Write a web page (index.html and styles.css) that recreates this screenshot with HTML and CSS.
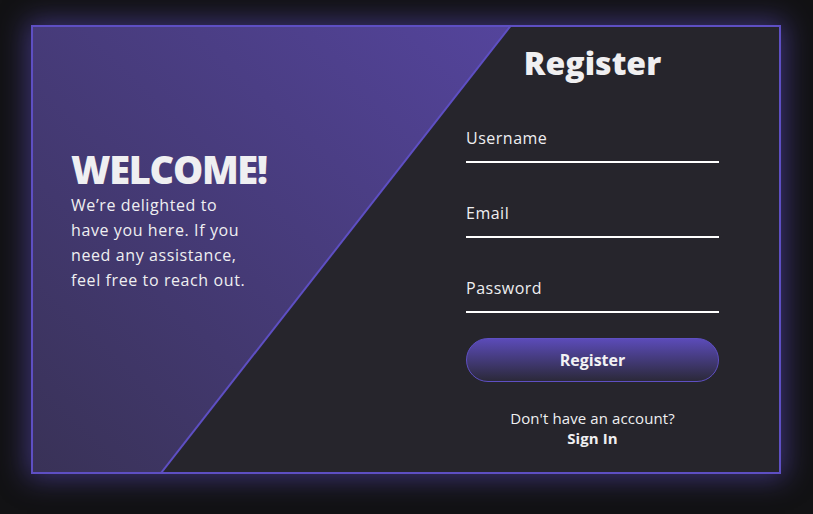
FILE: index.html
```html
<!DOCTYPE html>
<html lang="en">
<head>
<meta charset="utf-8">
<title>Register</title>
<link rel="stylesheet" href="styles.css">
</head>
<body>
<div class="card">
  <svg class="shape" width="746" height="445" viewBox="0 0 746 445" aria-hidden="true">
    <defs>
      <linearGradient id="lg" x1="0" y1="1" x2="1" y2="0">
        <stop offset="0" stop-color="#393257"/>
        <stop offset="1" stop-color="#54449c"/>
      </linearGradient>
    </defs>
    <polygon points="0,0 477,0 128,445 0,445" fill="url(#lg)"/>
    <line x1="477.5" y1="-1" x2="128" y2="446" stroke="#5e4fc3" stroke-width="2"/>
  </svg>
  <section class="welcome">
    <h1 class="welcome-title">WELCOME!</h1>
    <p class="welcome-text">We’re delighted to<br>have you here. If you<br>need any assistance,<br>feel free to reach out.</p>
  </section>
  <section class="form-panel">
    <h2 class="form-title">Register</h2>
    <div class="field"><label class="field-label">Username</label></div>
    <div class="field"><label class="field-label">Email</label></div>
    <div class="field"><label class="field-label">Password</label></div>
    <button class="btn">Register</button>
    <p class="switch">Don't have an account?<br><a class="switch-link">Sign In</a></p>
  </section>
</div>
</body>
</html>
```
FILE: styles.css
```css
* { box-sizing: border-box; }
html, body { margin: 0; padding: 0; }
body {
  width: 813px;
  height: 514px;
  background: #121214;
  font-family: "Open Sans", "Noto Sans", sans-serif;
  color: #efeff1;
  padding: 25px 0 0 31px;
  overflow: hidden;
}
.card {
  position: relative;
  width: 750px;
  height: 449px;
  border: 2px solid #5e4fc3;
  background: #26252c;
  box-shadow: 0 0 26px 4px rgba(94, 79, 195, 0.55);
  display: flex;
}
.shape {
  position: absolute;
  left: 0;
  top: 0;
}
.welcome {
  position: relative;
  width: 373px;
  padding: 119px 0 0 38px;
}
.welcome-title {
  margin: 0;
  font-size: 38px;
  line-height: 46px;
  font-weight: 800;
  letter-spacing: -1.3px;
}
.welcome-text {
  margin: 1px 0 0;
  font-size: 16px;
  line-height: 25px;
  font-weight: 500;
  letter-spacing: 0.6px;
}
.form-panel {
  position: relative;
  width: 373px;
  padding-top: 16px;
  display: flex;
  flex-direction: column;
  align-items: center;
}
.form-title {
  margin: 0 0 43px;
  font-size: 32px;
  line-height: 40px;
  font-weight: 800;
}
.field {
  width: 253px;
  padding-bottom: 11px;
  border-bottom: 2px solid #ffffff;
  margin-bottom: 38px;
}
.field:nth-of-type(3) { margin-bottom: 25px; }
.field-label {
  display: block;
  font-size: 16px;
  line-height: 24px;
  font-weight: 500;
  letter-spacing: 0.5px;
}
.btn {
  width: 253px;
  height: 44px;
  border: 1px solid #5e4fc3;
  border-radius: 22px;
  background: linear-gradient(to bottom, #5b4bb8, #2b2939);
  color: #f2f2f4;
  font-family: inherit;
  font-size: 16px;
  font-weight: 700;
  padding: 0;
}
.switch {
  margin: 26px 0 0;
  text-align: center;
  font-size: 15px;
  line-height: 20px;
  font-weight: 500;
  letter-spacing: 0.1px;
}
.switch-link {
  font-weight: 700;
}
```
